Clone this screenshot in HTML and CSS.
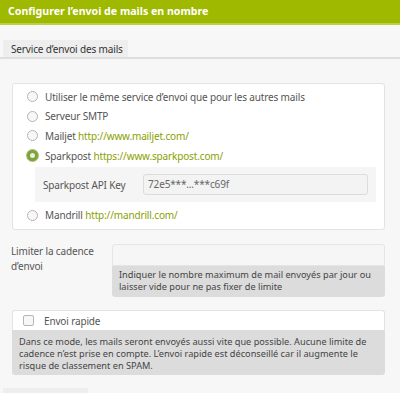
FILE: index.html
```html
<!DOCTYPE html>
<html lang="fr">
<head>
<meta charset="utf-8">
<link rel="stylesheet" href="styles.css">
</head>
<body>
<div class="title">Configurer l’envoi de mails en nombre</div>
<div class="tabs"><div class="tab">Service d’envoi des mails</div></div>

<div class="card">
  <label class="radio-row"><span class="radio"></span><span>Utiliser le même service d’envoi que pour les autres mails</span></label>
  <label class="radio-row"><span class="radio"></span><span>Serveur SMTP</span></label>
  <label class="radio-row"><span class="radio"></span><span>Mailjet <a class="link">http://www.mailjet.com/</a></span></label>
  <label class="radio-row"><span class="radio checked"></span><span>Sparkpost <a class="link">https://www.sparkpost.com/</a></span></label>
  <div class="subpanel">
    <span class="sublabel">Sparkpost API Key</span>
    <div class="input key">72e5***...***c69f</div>
  </div>
  <label class="radio-row"><span class="radio"></span><span>Mandrill <a class="link">http://mandrill.com/</a></span></label>
</div>

<div class="field">
  <div class="field-label">Limiter la cadence d’envoi</div>
  <div class="field-body">
    <div class="input empty"></div>
    <div class="help">Indiquer le nombre maximum de mail envoyés par jour ou<br>laisser vide pour ne pas fixer de limite</div>
  </div>
</div>

<div class="check-card">
  <div class="check-row"><span class="checkbox"></span><span>Envoi rapide</span></div>
  <div class="help wide">Dans ce mode, les mails seront envoyés aussi vite que possible. Aucune limite de<br>cadence n’est prise en compte. L’envoi rapide est déconseillé car il augmente le<br>risque de classement en SPAM.</div>
</div>

<div class="bottom-tab"></div>
</body>
</html>
```
FILE: styles.css
```css
html, body {
  margin: 0;
  padding: 0;
}
body {
  background: #f7f7f7;
  font-family: "Noto Sans", "DejaVu Sans", sans-serif;
  font-size: 10px;
  letter-spacing: -0.15px;
  color: #555;
  width: 400px;
  height: 393px;
  overflow: hidden;
}
.title {
  height: 23px;
  line-height: 23px;
  background: #9fb900;
  border-bottom: 2px solid #b9d14a;
  color: #fff;
  font-weight: bold;
  font-size: 10.6px;
  letter-spacing: 0;
  padding-left: 8px;
}
.tabs {
  margin-top: 15px;
  border-bottom: 2px solid #dedede;
  padding-left: 3px;
  display: flex;
}
.tab {
  background: #eeeeee;
  color: #333;
  white-space: nowrap;
  padding: 1px 5px 0 8px;
  height: 16px;
  line-height: 16px;
}
.card {
  margin: 24px 15px 0 12px;
  background: #fff;
  border: 1px solid #e3e3e3;
  border-radius: 3px;
  padding: 3px 8px 4px 14px;
}
.radio-row {
  display: flex;
  align-items: center;
  height: 19.6px;
}
.radio {
  border: 1px solid #b5b5b5;
  border-radius: 50%;
  background: #f7f7f7;
  margin-right: 7px;
  box-sizing: border-box;
  width: 11px;
  height: 11px;
  flex: none;
}
.radio.checked {
  border: 3px solid #7fa33a;
  background: #e9f0dc;
  box-shadow: 0 0 0 1px #a9c07a;
}
.link {
  color: #8aa000;
}
.subpanel {
  margin: 2px 0 3px 8px;
  background: #f5f5f5;
  height: 35px;
  display: flex;
  align-items: center;
  padding: 0 8px;
}
.sublabel {
  width: 100px;
  flex: none;
}
.input {
  border: 1px solid #dcdcdc;
  border-radius: 3px;
  background: #f3f3f3;
  box-sizing: border-box;
}
.key {
  flex: 1;
  height: 21px;
  line-height: 19px;
  padding-left: 4px;
  color: #666;
}
.field {
  display: flex;
  margin: 14px 15px 0 11px;
}
.field-label {
  width: 101px;
  flex: none;
  line-height: 15px;
}
.field-body {
  flex: 1;
}
.input.empty {
  height: 22px;
  background: #f6f6f6;
  border-color: #e5e5e5;
  border-radius: 3px 3px 0 0;
}
.help {
  background: #dcdcdc;
  color: #444;
  font-size: 9.2px;
  letter-spacing: 0;
  line-height: 12px;
  padding: 3px 6px 4px 7px;
  border-radius: 0 0 3px 3px;
  white-space: nowrap;
  overflow: hidden;
}
.check-card {
  margin: 13px 15px 0 12px;
}
.check-row {
  background: #fff;
  border: 1px solid #e3e3e3;
  border-bottom: none;
  border-radius: 3px 3px 0 0;
  height: 20px;
  display: flex;
  align-items: center;
  padding: 1px 0 0 10px;
  box-sizing: border-box;
}
.checkbox {
  width: 11px;
  height: 11px;
  border: 1px solid #b5b5b5;
  border-radius: 2px;
  background: #f7f7f7;
  box-sizing: border-box;
  margin-right: 10px;
}
.help.wide {
  padding: 6px 6px 3px 7px;
}
.bottom-tab {
  margin: 13px 0 0 3px;
  width: 85px;
  height: 6px;
  background: #eeeeee;
}
```
